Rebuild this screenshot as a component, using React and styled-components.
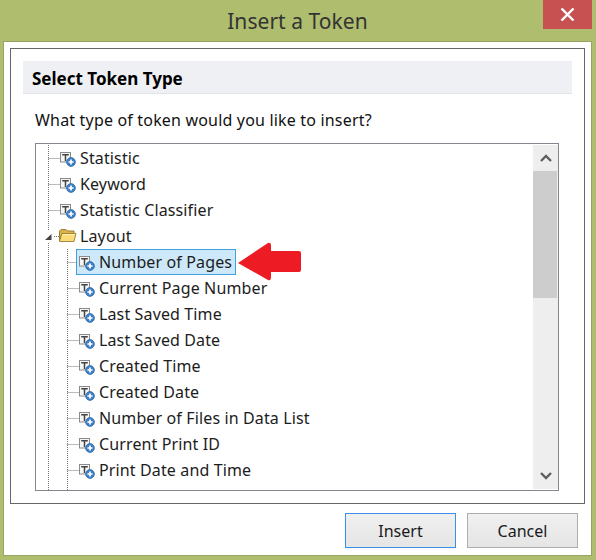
import React from "react";
import styled, { createGlobalStyle } from "styled-components";

const Global = createGlobalStyle`
  html, body { margin: 0; padding: 0; width: 596px; height: 560px; overflow: hidden; }
  body { background: #afbd6e; font-family: "Noto Sans", "Open Sans", sans-serif; color: #1a1a1a; }
`;
const Frame = styled.div`
  position: relative; width: 596px; height: 560px; display: flex; flex-direction: column;
  box-sizing: border-box; padding: 0 4px 4px 3px;
`;
const TitleBar = styled.header`
  height: 41px; flex: none; display: flex; justify-content: center; position: relative;
`;
const Title = styled.h1`
  margin: 6px 0 0; font-size: 21px; font-weight: 400; line-height: 30px; color: #333; letter-spacing: .05px;
`;
const Close = styled.button`
  position: absolute; top: 0; right: 0; width: 49px; height: 29px; border: 0; padding: 0;
  background: #c75050; display: flex; align-items: center; justify-content: center;
`;
const Client = styled.main`
  flex: 1; min-height: 0; background: #fff; border: 1px solid #97a35f; box-sizing: border-box;
  padding: 6px 6px 0; display: flex; flex-direction: column;
`;
const Panel = styled.section`
  height: 456px; flex: none; box-sizing: border-box; border: 1px solid #666;
  padding: 12px 12px 0;
`;
const Band = styled.h2`
  margin: 0; height: 33px; box-sizing: border-box; background: #eff0f4; border-bottom: 1px solid #e3e4e8;
  padding-left: 9px; font-size: 17px; line-height: 35px; font-weight: 700; color: #000;
`;
const Question = styled.p`
  margin: 0; padding: 12px 0 0 12px; height: 49px; box-sizing: border-box; font-size: 16px; line-height: 28px;
  color: #111; letter-spacing: .18px;
`;
const ListBox = styled.div`
  margin-left: 12px; width: 524px; height: 348px; box-sizing: border-box; border: 1px solid #86868f;
  padding: 1px 0 1px 1px; display: flex;
`;
const Tree = styled.ul`
  list-style: none; margin: 0; padding: 0; flex: 1; overflow: hidden; height: 345px;
`;
const Row = styled.li`
  height: 26px; display: flex; align-items: center; font-size: 16px; color: #1c1c1c; white-space: nowrap;
  letter-spacing: .13px;
`;
const Label = styled.span`
  display: flex; align-items: center; height: 26px; gap: 4px; box-sizing: border-box;
  margin-left: ${(p) => (p.$selected ? "-3px" : "0")};
  padding: ${(p) => (p.$selected ? "0 3px 0 2px" : "0")};
  border: ${(p) => (p.$selected ? "1px solid #3fa0dc" : "0")};
  background: ${(p) => (p.$selected ? "#cde8f9" : "transparent")};
`;
const IconSvg = styled.svg`
  flex: none; width: 16px; height: 18px; overflow: visible;
`;
const Bar = styled.div`
  width: 25px; background: #eeeeee; display: flex; flex-direction: column; flex: none; height: 344px;
`;
const BarButton = styled.div`
  height: 26px; flex: none; display: flex; align-items: center; justify-content: center;
`;
const Track = styled.div`
  flex: 1; display: flex; flex-direction: column;
`;
const Thumb = styled.div`
  height: 127px; width: 24px; background: #cdcdcd;
`;
const Footer = styled.footer`
  flex: 1; display: flex; justify-content: flex-end; gap: 11px; padding: 9px 7px 0 0;
`;
const Button = styled.button`
  width: 111px; height: 35px; box-sizing: border-box; font: 400 16px "Noto Sans", "Open Sans", sans-serif; color: #1a1a1a;
  padding: 0; border: 1px solid ${(p) => (p.$primary ? "#3c8fe6" : "#adadad")};
  background: linear-gradient(#f0f0f0, #e5e5e5);
`;
const Pointer = styled.svg`
  position: absolute; left: 236px; top: 241px;
`;

const Gutter = ({ depth, expander }) => {
  const w = depth === 1 ? 42 : 23;
  const dot = { stroke: "#777", strokeWidth: 1, strokeDasharray: "1 1", fill: "none" };
  return (
    <svg width={w} height="26" style={{ flex: "none" }}>
      {expander ? (
        <>
          <path d="M11.5 0V7M11.5 20V26" {...dot} />
          <path d="M14.5 11 L8 17 L14.5 17 Z" fill="#444" />
          <path d="M17 13.5H22" {...dot} />
        </>
      ) : (
        <path d="M11.5 0V26" {...dot} />
      )}
      {depth === 1 ? <path d="M30.5 0V26M30.5 13.5H42" {...dot} /> : !expander && <path d="M11.5 13.5H23" {...dot} />}
    </svg>
  );
};

const TokenIcon = () => (
  <IconSvg viewBox="0 0 16 18">
    <rect x=".5" y="3.5" width="10" height="9.5" fill="#f6f6f6" stroke="#8a8a8a" />
    <path d="M2.2 5.8H8.8M5.5 5.8V12" stroke="#444" strokeWidth="1.5" fill="none" />
    <circle cx="11" cy="13" r="4.4" fill="#3d7fc4" stroke="#2f6cab" strokeWidth=".8" />
    <path d="M11 10.4V15.6M8.4 13H13.6" stroke="#fff" strokeWidth="1.7" />
  </IconSvg>
);

const FolderIcon = () => (
  <IconSvg viewBox="0 0 16 18">
    <path d="M-.5 4 L1 2.5H6L7.5 4H14V7H2L-.5 14Z" fill="#dcb445" stroke="#8f7530" strokeWidth=".9" />
    <path d="M-.5 14.5 L1.8 6.5H16L14 14.5Z" fill="#f9dc78" stroke="#9c7f32" strokeWidth=".9" />
    <path d="M2.6 7.7H14.8" stroke="#fff3c0" strokeWidth="1" />
  </IconSvg>
);

const UpChevron = ({ flip }) => (
  <svg width="12" height="8" viewBox="0 0 12 8" style={{ transform: flip ? "scaleY(-1)" : "none" }}>
    <path d="M1 7L6 2L11 7" stroke="#5f5f5f" strokeWidth="2.4" fill="none" />
  </svg>
);

const items = [
  { t: "Statistic", d: 0 },
  { t: "Keyword", d: 0 },
  { t: "Statistic Classifier", d: 0 },
  { t: "Layout", d: 0, folder: true },
  { t: "Number of Pages", d: 1, selected: true },
  { t: "Current Page Number", d: 1 },
  { t: "Last Saved Time", d: 1 },
  { t: "Last Saved Date", d: 1 },
  { t: "Created Time", d: 1 },
  { t: "Created Date", d: 1 },
  { t: "Number of Files in Data List", d: 1 },
  { t: "Current Print ID", d: 1 },
  { t: "Print Date and Time", d: 1 },
  { t: "", d: 1, blank: true },
];

export default function App() {
  return (
    <>
      <Global />
      <Frame>
        <TitleBar>
          <Title>Insert a Token</Title>
          <Close aria-label="Close">
            <svg width="15" height="13" viewBox="0 0 15 13">
              <path d="M1.5 .5L13.5 12.5M13.5 .5L1.5 12.5" stroke="#fff" strokeWidth="2.4" />
            </svg>
          </Close>
        </TitleBar>
        <Client>
          <Panel>
            <Band>Select Token Type</Band>
            <Question>What type of token would you like to insert?</Question>
            <ListBox>
              <Tree>
                {items.map((it, i) => (
                  <Row key={i}>
                    <Gutter depth={it.d} expander={it.folder} />
                    {!it.blank && (
                      <Label $selected={it.selected}>
                        {it.folder ? <FolderIcon /> : <TokenIcon />}
                        {it.t}
                      </Label>
                    )}
                  </Row>
                ))}
              </Tree>
              <Bar>
                <BarButton><UpChevron /></BarButton>
                <Track><Thumb /></Track>
                <BarButton><UpChevron flip /></BarButton>
              </Bar>
            </ListBox>
          </Panel>
          <Footer>
            <Button $primary>Insert</Button>
            <Button>Cancel</Button>
          </Footer>
        </Client>
        <Pointer width="68" height="42" viewBox="0 0 68 42">
          <path d="M2 22 L32 2 Q35 1 35 5 V10 H63 Q65 10 65 12 V29 Q65 31 63 31 H35 V36 Q35 40 32 39 Z" fill="#ed1c24" />
        </Pointer>
      </Frame>
    </>
  );
}
